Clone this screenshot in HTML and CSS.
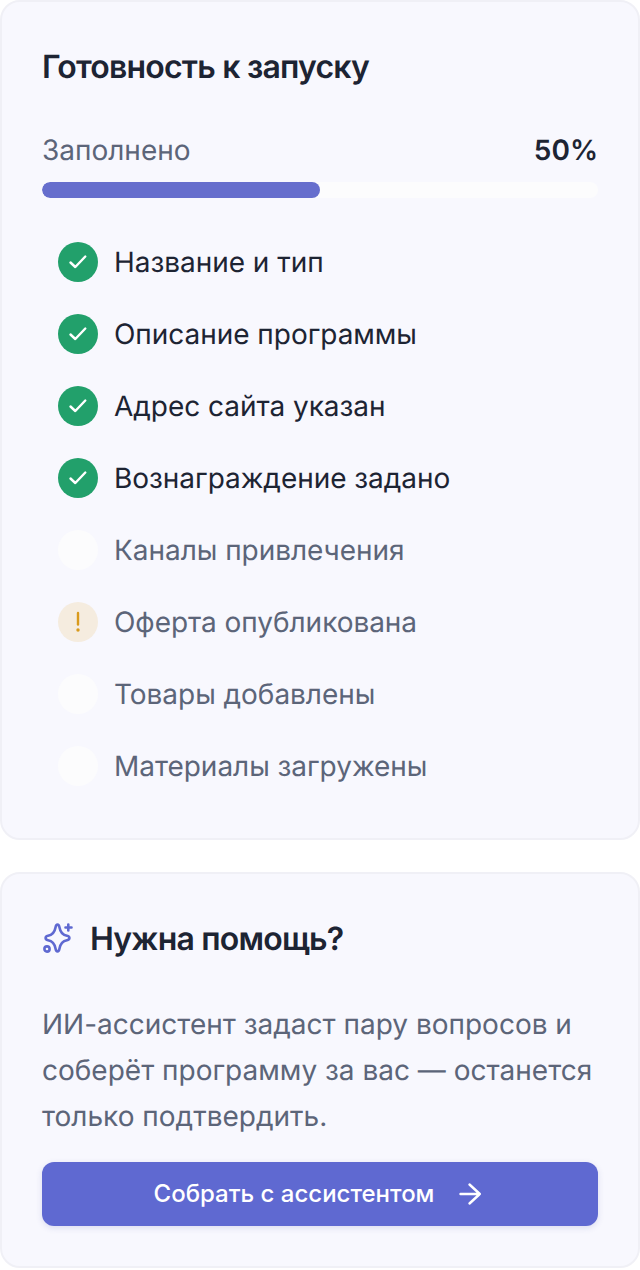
FILE: index.html
```html
<!DOCTYPE html>
<html>
<head>
    <title>Готовность к запуску</title>
    <link rel="stylesheet" href="styles.css">
</head>
<body>
    <section class="card readiness">
        <h2 class="card-title">Готовность к запуску</h2>
        <div class="progress-head">
            <span class="progress-label">Заполнено</span>
            <span class="progress-value">50%</span>
        </div>
        <div class="progress-track"><div class="progress-fill" style="width: 50%"></div></div>
        <ul class="checklist">
            <li class="check-row done">
                <span class="mark mark-done"><svg viewBox="0 0 24 24" width="24" height="24"><path d="M4.500 12.500l4.800 4.500 10-10.500"/></svg></span>
                Название и тип
            </li>
            <li class="check-row done">
                <span class="mark mark-done"><svg viewBox="0 0 24 24" width="24" height="24"><path d="M4.500 12.500l4.800 4.500 10-10.500"/></svg></span>
                Описание программы
            </li>
            <li class="check-row done">
                <span class="mark mark-done"><svg viewBox="0 0 24 24" width="24" height="24"><path d="M4.500 12.500l4.800 4.500 10-10.500"/></svg></span>
                Адрес сайта указан
            </li>
            <li class="check-row done">
                <span class="mark mark-done"><svg viewBox="0 0 24 24" width="24" height="24"><path d="M4.500 12.500l4.800 4.500 10-10.500"/></svg></span>
                Вознаграждение задано
            </li>
            <li class="check-row">
                <span class="mark"></span>
                Каналы привлечения
            </li>
            <li class="check-row">
                <span class="mark mark-warn"><svg viewBox="0 0 24 24" width="24" height="24"><path d="M12 3v11.500"/><circle cx="12" cy="20" r="1.700"/></svg></span>
                Оферта опубликована
            </li>
            <li class="check-row">
                <span class="mark"></span>
                Товары добавлены
            </li>
            <li class="check-row">
                <span class="mark"></span>
                Материалы загружены
            </li>
        </ul>
    </section>

    <section class="card help">
        <div class="help-head">
            <svg class="sparkle" viewBox="0 0 32 32" width="32" height="32">
                <path d="M15.500 1.600C16.800 1.600 17.200 2.800 17.500 4.500C18.300 9 20.500 12 25 12.800C26.500 13.100 27.400 13.700 27.400 15C27.400 16.300 26.500 16.900 25 17.200C20.500 18 18.300 21 17.500 25.500C17.200 27.200 16.800 28.400 15.500 28.400C14.200 28.400 13.800 27.200 13.500 25.500C12.700 21 10.500 18 6 17.200C4.500 16.900 3.600 16.300 3.600 15C3.600 13.700 4.500 13.100 6 12.800C10.500 12 12.700 9 13.500 4.500C13.800 2.800 14.200 1.600 15.500 1.600Z"/>
                <path d="M26.300 1.500v6M23.500 4.500h6"/>
                <circle cx="5" cy="26" r="2.600"/>
            </svg>
            <h2 class="card-title">Нужна помощь?</h2>
        </div>
        <p class="help-text">ИИ-ассистент задаст пару вопросов и соберёт программу за вас — останется только подтвердить.</p>
        <button class="assist-btn" type="button">
            Собрать с ассистентом
            <svg viewBox="0 0 28 28" width="28" height="28"><path d="M2.500 15H21.800M11.500 5.500L21.800 15 11.500 24.500"/></svg>
        </button>
    </section>
</body>
</html>
```

FILE: styles.css
```css
* {
    box-sizing: border-box;
}

body {
    margin: 0;
    background-color: #fff;
    font-family: Inter, "Noto Sans", sans-serif;
    color: #1d2433;
    text-rendering: geometricPrecision;
}

.card {
    background-color: #f8f8fe;
    border: 2px solid #f0f0f6;
    border-radius: 20px;
    padding: 40px;
}

.readiness {
    height: 840px;
    margin-bottom: 32px;
}

.help {
    height: 396px;
}

.card-title {
    margin: 0;
    font-size: 32px;
    line-height: 50px;
    font-weight: 600;
    letter-spacing: -0.8px;
}

.progress-head {
    display: flex;
    justify-content: space-between;
    align-items: center;
    margin-top: 38px;
    line-height: 40px;
    font-size: 28px;
}

.progress-label {
    color: #5c6579;
}

.progress-value {
    font-weight: 600;
}

.progress-track {
    height: 16px;
    margin-top: 12px;
    border-radius: 8px;
    background-color: #fcfcfd;
    overflow: hidden;
}

.progress-fill {
    height: 100%;
    border-radius: 8px;
    background-color: #666ecd;
}

.checklist {
    list-style: none;
    margin: 28px 0 0;
    padding: 0 0 0 16px;
}

.check-row {
    display: flex;
    align-items: center;
    gap: 16px;
    height: 72px;
    font-size: 28px;
    letter-spacing: -0.04px;
    color: #5c6579;
}

.check-row.done {
    color: #1d2433;
}

.mark {
    display: flex;
    align-items: center;
    justify-content: center;
    width: 40px;
    height: 40px;
    flex-shrink: 0;
    border-radius: 50%;
    background-color: #fcfcfd;
}

.mark svg {
    fill: none;
    stroke-width: 2.400;
    stroke-linecap: round;
    stroke-linejoin: round;
}

.mark-done {
    background-color: #22a06b;
}

.mark-done svg {
    stroke: #fff;
}

.mark-warn {
    background-color: #f5ecdf;
}

.mark-warn svg {
    stroke: #d99a1c;
}

.mark-warn circle {
    fill: #d99a1c;
    stroke: none;
}

.help-head {
    display: flex;
    align-items: center;
    gap: 16px;
    height: 50px;
}

.sparkle {
    fill: none;
    stroke: #5f69d1;
    stroke-width: 2.600;
    stroke-linecap: round;
    stroke-linejoin: round;
    flex-shrink: 0;
}

.help-text {
    margin: 37px 0 0;
    font-size: 28px;
    line-height: 46px;
    color: #5c6579;
}

.assist-btn {
    display: flex;
    align-items: center;
    justify-content: center;
    gap: 24px;
    width: 100%;
    height: 64px;
    margin-top: 23px;
    padding: 0 0 2px;
    border: none;
    border-radius: 12px;
    background-color: #5f69d1;
    box-shadow: 0 2px 6px rgba(60, 70, 160, 0.15);
    color: #fff;
    font-family: inherit;
    font-size: 24px;
    font-weight: 500;
}

.assist-btn svg {
    fill: none;
    stroke: #fff;
    stroke-width: 2.400;
    stroke-linecap: round;
    stroke-linejoin: round;
}
```
